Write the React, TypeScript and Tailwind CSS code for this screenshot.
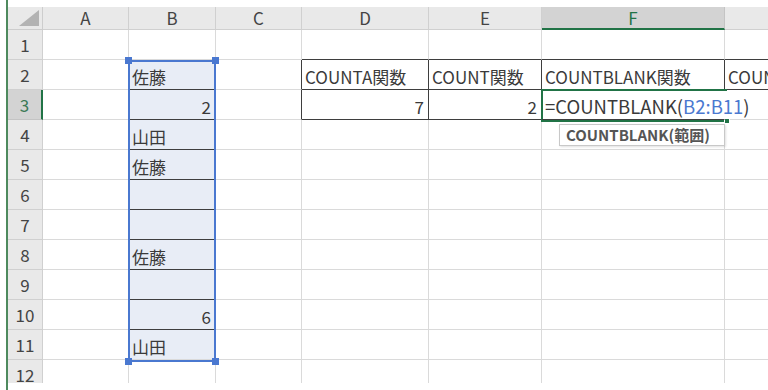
import React from 'react'

const COLS = ['A', 'B', 'C', 'D', 'E', 'F', 'G']
const ROWS = [1, 2, 3, 4, 5, 6, 7, 8, 9, 10, 11, 12]

type CellData = { text: React.ReactNode; right?: boolean }

const DATA: Record<string, CellData> = {
    B2: { text: '佐藤' },
    B3: { text: '2', right: true },
    B4: { text: '山田' },
    B5: { text: '佐藤' },
    B8: { text: '佐藤' },
    B10: { text: '6', right: true },
    B11: { text: '山田' },
    D2: { text: 'COUNTA関数' },
    E2: { text: 'COUNT関数' },
    F2: { text: 'COUNTBLANK関数' },
    G2: { text: 'COUNTIF関数' },
    D3: { text: '7', right: true },
    E3: { text: '2', right: true },
}

// cells whose right / bottom edge carries a dark border
const DARK_RIGHT = new Set(['C2', 'C3', 'D2', 'D3', 'E2', 'E3', 'F2'])
const DARK_BOTTOM = new Set([
    'D1', 'E1', 'F1', 'G1', 'D2', 'E2', 'F2', 'G2', 'D3', 'E3',
    'B2', 'B3', 'B4', 'B5', 'B6', 'B7', 'B8', 'B9', 'B10',
])

const FONT = { fontFamily: '"Noto Sans CJK JP", "Noto Sans", sans-serif' }

function Cell({ id }: { id: string }) {
    const d = DATA[id]
    const inSel = id[0] === 'B' && +id.slice(1) >= 2 && +id.slice(1) <= 11
    const r = DARK_RIGHT.has(id) ? 'border-r-[#3e3e3e]' : 'border-r-[#dadada]'
    const b = DARK_BOTTOM.has(id) ? 'border-b-[#3e3e3e]' : 'border-b-[#dadada]'
    return (
        <div
            className={`flex items-center pt-[5px] border-r border-b ${r} ${b} ${inSel ? 'bg-[#e8edf6]' : ''} ${d?.right ? 'justify-end pr-[4px]' : 'pl-[3px]'} overflow-hidden`}
        >
            {d && <span className="whitespace-nowrap text-[17px] leading-[22px] text-[#3a3a3a]">{d.text}</span>}
        </div>
    )
}

export default function App() {
    return (
        <div className="h-[390px] w-[768px] bg-white pl-[6px] overflow-hidden" style={FONT}>
            <div className="h-full border-l-2 border-[#4e8a5e] pt-[7px]">
                <div className="relative h-[376px] overflow-hidden">
                    <div className="grid w-[857px] grid-cols-[35px_86px_87px_86px_127px_113px_183px_140px] grid-rows-[23px_repeat(12,30px)]">
                        {/* Corner */}
                        <div className="relative bg-[#e9e9e9] border-r border-b border-[#cdcdcd]">
                            <svg className="absolute right-[3px] bottom-[3px]" width="20" height="16" viewBox="0 0 20 16">
                                <polygon points="20,0 20,16 0,16" fill="#b3b3b3" />
                            </svg>
                        </div>
                        {/* Column headers */}
                        {COLS.map((c) =>
                            c === 'F' ? (
                                <div key={c} className="flex items-center justify-center bg-[#d3d3d3] border-r border-r-[#c4c4c4] border-b-2 border-b-[#217346] text-[17px] leading-[21px] text-[#217346]">
                                    {c}
                                </div>
                            ) : (
                                <div key={c} className="flex items-center justify-center bg-[#e9e9e9] border-r border-b border-[#d0d0d0] text-[17px] leading-[22px] text-[#444]">
                                    {c}
                                </div>
                            )
                        )}
                        {/* Rows */}
                        {ROWS.map((r) => (
                            <React.Fragment key={r}>
                                {r === 3 ? (
                                    <div className="flex items-center justify-center bg-[#d3d3d3] border-r-2 border-r-[#217346] border-b border-b-[#c4c4c4] text-[17px] leading-[22px] text-[#3c7a56]">
                                        {r}
                                    </div>
                                ) : (
                                    <div className="flex items-center justify-center bg-[#e9e9e9] border-r border-b border-[#d0d0d0] text-[17px] leading-[22px] text-[#444]">
                                        {r}
                                    </div>
                                )}
                                {COLS.map((c) =>
                                    c + r === 'F3' ? (
                                        <div key={c} className="relative z-30 flex items-center pt-[3px] pl-[3px] border-r border-r-transparent border-b border-b-[#3e3e3e]">
                                            <span className="whitespace-nowrap text-[18.5px] leading-[22px] text-[#3a3a3a]">
                                                =COUNTBLANK(<span className="text-[#4a78d0]">B2:B11</span>)
                                            </span>
                                        </div>
                                    ) : (
                                        <Cell key={c} id={c + r} />
                                    )
                                )}
                            </React.Fragment>
                        ))}
                    </div>

                    {/* Selection B2:B11 */}
                    <div className="absolute left-[120px] top-[53px] w-[88px] h-[302px] border-2 border-[#4a78d0] z-20 pointer-events-none">
                        <div className="absolute -left-[5px] -top-[5px] w-[7px] h-[7px] bg-[#4a78d0]" />
                        <div className="absolute -right-[5px] -top-[5px] w-[7px] h-[7px] bg-[#4a78d0]" />
                        <div className="absolute -left-[5px] -bottom-[5px] w-[7px] h-[7px] bg-[#4a78d0]" />
                        <div className="absolute -right-[5px] -bottom-[5px] w-[7px] h-[7px] bg-[#4a78d0]" />
                    </div>

                    {/* Active cell F3 (text runs past its right edge) */}
                    <div className="absolute left-[533px] top-[82px] w-[186px] h-[33px] border-2 border-r-0 border-[#217346] z-20 pointer-events-none">
                        <div className="absolute -right-[3px] -bottom-[4px] w-[6px] h-[6px] bg-[#217346] border border-white" />
                    </div>

                    {/* Function tooltip */}
                    <div className="absolute left-[551px] top-[117px] w-[166px] h-[22px] flex items-center pl-[6px] bg-white border border-[#c8c8c8] shadow-[1px_1px_2px_rgba(0,0,0,0.12)] z-40">
                        <span className="whitespace-nowrap text-[15px] leading-[20px] font-bold text-[#555]">COUNTBLANK(範囲)</span>
                    </div>
                </div>
            </div>
        </div>
    )
}
